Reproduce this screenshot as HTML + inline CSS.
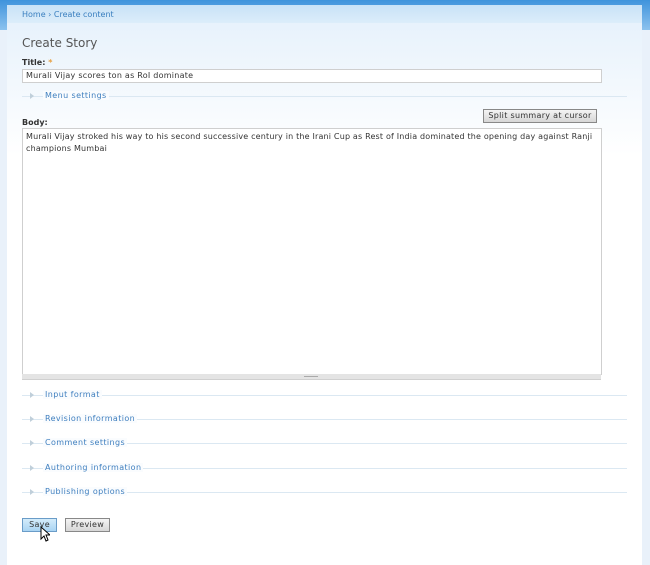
<!DOCTYPE html><html><head><style>
body{margin:0;width:650px;height:548px;background:#e9f1fa;font-family:Verdana,"DejaVu Sans",sans-serif;font-size:8px;color:#444;position:relative;overflow:hidden}
.top{position:absolute;left:0;top:0;width:650px;height:30px;background:linear-gradient(#3f93dc,#8cc2ee)}
.page{position:absolute;left:7px;top:5px;width:635px;height:560px;background:linear-gradient(#e4f0fb 0px,#fff 150px);}
.bc{position:absolute;left:7px;top:5px;width:635px;height:18px;background:linear-gradient(#c8e2f7,#dcedfa);color:#3a7fbf;font-size:8px;line-height:19px}
.bc span{margin-left:15px}
.a{position:absolute}
h1{position:absolute;left:22px;top:36px;margin:0;font-weight:normal;font-size:12px;color:#555;font-family:"DejaVu Sans",sans-serif}
.lbl{font-weight:bold;color:#333}
.inp{position:absolute;left:22px;background:#fff;border:1px solid #cfcfcf}
.fs{position:absolute;left:22px;width:605px;height:1px;background:#dbe8f2}
.fs span{position:absolute;left:21px;top:-5px;background:#fafcfe;padding:0 2px;color:#3f7fbf;font-size:8px;letter-spacing:.4px}
.fs i{position:absolute;left:8px;top:-3px;width:0;height:0;border-left:4px solid #c0cfda;border-top:3px solid transparent;border-bottom:3px solid transparent}
.btn{position:absolute;border:1px solid #888;background:linear-gradient(#f4f4f4,#d6d6d6);font-size:8px;text-align:center;line-height:12px;color:#333;letter-spacing:.3px}
</style></head><body>
<div class="top"></div>
<div class="page"></div>
<div class="bc"><span>Home › Create content</span></div>
<h1>Create Story</h1>
<div class="a lbl" style="left:22px;top:58px">Title: <span style="color:#e8a040">*</span></div>
<div class="inp" style="top:69px;width:578px;height:12px;line-height:12px"><span style="margin-left:3px;color:#333;letter-spacing:.25px">Murali Vijay scores ton as RoI dominate</span></div>
<div class="fs" style="top:96px"><i></i><span>Menu settings</span></div>
<div class="btn" style="left:483px;top:109px;width:112px;height:12px">Split summary at cursor</div>
<div class="a lbl" style="left:22px;top:118px">Body:</div>
<div class="inp" style="top:128px;width:578px;height:245px;padding:0;overflow:hidden"><div style="margin:2px 0 0 3px;line-height:12px;color:#333;letter-spacing:.18px;white-space:nowrap">Murali Vijay stroked his way to his second successive century in the Irani Cup as Rest of India dominated the opening day against Ranji<br>champions Mumbai</div></div>
<div class="a" style="left:22px;top:374px;width:579px;height:5px;background:#e4e4e4;border-bottom:1px solid #d0d0d0"><div style="position:absolute;left:282px;top:2px;width:14px;height:1px;background:#aaa"></div></div>
<div class="fs" style="top:395px"><i></i><span>Input format</span></div>
<div class="fs" style="top:419px"><i></i><span>Revision information</span></div>
<div class="fs" style="top:443px"><i></i><span>Comment settings</span></div>
<div class="fs" style="top:468px"><i></i><span>Authoring information</span></div>
<div class="fs" style="top:492px"><i></i><span>Publishing options</span></div>
<div class="btn" style="left:22px;top:518px;width:33px;height:12px;background:linear-gradient(#d4ecfb,#a9d4f3);border-color:#6a9cc8">Save</div>
<div class="btn" style="left:65px;top:518px;width:43px;height:12px">Preview</div>
<svg class="a" style="left:40px;top:526px" width="10" height="16" viewBox="0 0 10 16"><path d="M1 1 L1 13 L4 10 L6 15 L8 14 L6 9 L10 9 Z" fill="#fff" stroke="#000" stroke-width="1"/></svg>
</body></html>
